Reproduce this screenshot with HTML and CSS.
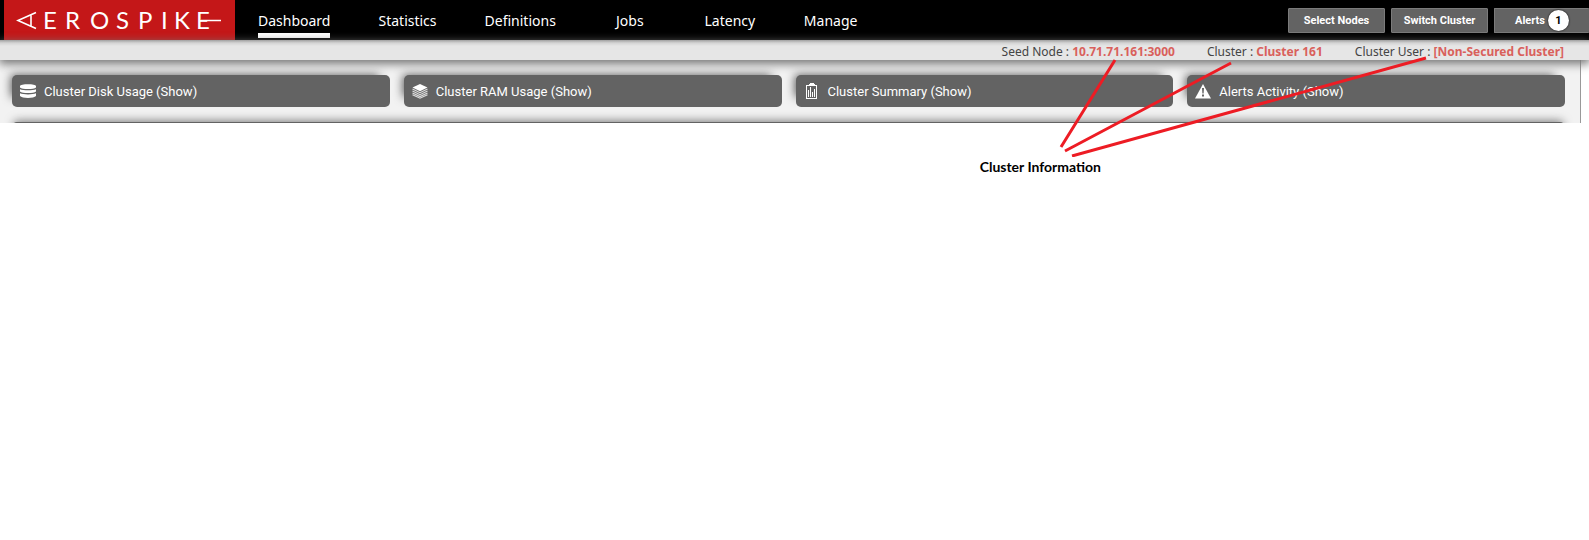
FILE: index.html
```html
<!DOCTYPE html>
<html lang="en">
<head>
<meta charset="utf-8">
<title>Aerospike Dashboard</title>
<link rel="stylesheet" href="styles.css">
</head>
<body>
<div class="console">
  <header class="topbar">
    <a class="logo" href="#" aria-label="Aerospike">
      <svg width="231" height="40" viewBox="0 0 231 40">
        <path class="stroke" d="M32 12.5 14 20.5 32 28.5M27 14.5V26.5M197 20.5H217"/>
        <text class="letters" y="29" x="39 61 86 112 134 157 170 192">EROSPIKE</text>
      </svg>
    </a>
    <nav class="nav">
      <a class="nav-link active" href="#">Dashboard</a>
      <a class="nav-link" href="#">Statistics</a>
      <a class="nav-link" href="#">Definitions</a>
      <a class="nav-link" href="#">Jobs</a>
      <a class="nav-link" href="#">Latency</a>
      <a class="nav-link" href="#">Manage</a>
    </nav>
    <div class="actions">
      <button class="action" type="button">Select Nodes</button>
      <button class="action" type="button">Switch Cluster</button>
      <button class="action last" type="button">Alerts <span class="count">1</span></button>
    </div>
  </header>
  <div class="infobar">
    <span>Seed Node : <b>10.71.71.161:3000</b></span>
    <span>Cluster : <b>Cluster 161</b></span>
    <span>Cluster User : <b>[Non-Secured Cluster]</b></span>
  </div>
  <main class="content">
    <div class="panels">
      <button class="panel" type="button">
        <svg class="icon" width="16" height="16" viewBox="0 0 16 16"><path fill="#fff" d="M0 3C0 .5 16 .5 16 3V4.500C14 6.500 2 6.500 0 4.500ZM0 6.200C3 7.700 13 7.700 16 6.200V8.500C14 10.500 2 10.500 0 8.500ZM0 10.300C3 11.800 13 11.800 16 10.300V13C14 15.500 2 15.500 0 13Z"/></svg>
        Cluster Disk Usage (Show)
      </button>
      <button class="panel" type="button">
        <svg class="icon" width="16" height="16" viewBox="0 0 16 16"><path fill="#fff" d="M8 1 15.500 4.500 8 8.200.5 4.500Z"/><path fill="none" stroke="#ddd" stroke-width="1.200" d="M.5 6 8 9.700 15.500 6M.5 8 8 11.700 15.500 8M.5 10 8 13.500 15.500 10M.5 11.800 8 15.200 15.500 11.800"/></svg>
        Cluster RAM Usage (Show)
      </button>
      <button class="panel" type="button">
        <svg class="icon" width="16" height="16" viewBox="0 0 16 16"><path fill="#fff" fill-rule="evenodd" d="M5 1H6V0H10V1H11V2H13V16H2V2H5ZM3 3V15H12V3Z"/><path fill="#fff" d="M4 7H5V14H4ZM6 4H7V14H6ZM8 9H9V14H8ZM10 6H11V14H10Z"/></svg>
        Cluster Summary (Show)
      </button>
      <button class="panel" type="button">
        <svg class="icon" width="16" height="16" viewBox="0 0 16 16"><path fill="#fff" d="M8 1 16 15.500H0Z"/><path fill="#636363" d="M7 5H9L8.600 10.500H7.400ZM7 11.500H9V13.500H7Z"/></svg>
        Alerts Activity (Show)
      </button>
    </div>
    <div class="next-section"></div>
  </main>
  <div class="annotation">
    <svg class="pointers" width="372" height="104" viewBox="0 0 372 104">
      <path d="M57 7 3 94M173 10 7 98M368 5 14 103"/>
    </svg>
    <p class="caption">Cluster Information</p>
  </div>
</div>
</body>
</html>
```
FILE: styles.css
```css
* { box-sizing: border-box; }
body {
  margin: 0;
  background: #fff;
  font-family: "Noto Sans", sans-serif;
}
.console {
  position: relative;
  min-height: 100vh;
  overflow: hidden;
}
.topbar {
  display: flex;
  height: 40px;
  padding-left: 4px;
  background: #000;
}
.logo { display: block; height: 40px; background: #c41718; }
.logo svg { display: block; }
.stroke { fill: none; stroke: #fff; stroke-width: 1.6; }
.letters { fill: #fff; font: 24px Lato, sans-serif; }
.nav { display: flex; gap: 48px; margin-left: 23px; }
.nav-link {
  min-width: 52px;
  height: 38px;
  padding-top: 11px;
  color: #fff;
  font-size: 14px;
  line-height: 20px;
  text-align: center;
  text-decoration: none;
}
.nav-link.active { border-bottom: 5px solid #fff; }
.actions { display: flex; gap: 6px; margin: 8px 0 0 auto; }
.action {
  display: flex;
  align-items: center;
  justify-content: center;
  width: 97px;
  height: 25px;
  padding: 0;
  border: 1px solid #7b7b7b;
  border-radius: 1px;
  background: #636363;
  color: #fff;
  font: 700 11px Roboto, sans-serif;
}
.action.last { width: 95px; border-right: 0; }
.count {
  width: 21px;
  height: 21px;
  margin-left: 3px;
  border-radius: 50%;
  background: #fff;
  box-shadow: 0 0 2px #000;
  color: #000;
  line-height: 21px;
}
.infobar {
  position: relative;
  display: flex;
  justify-content: flex-end;
  gap: 32px;
  height: 20px;
  padding: 2px 25px 0 0;
  background: linear-gradient(#a0a0a0, #d4d4d4 3px, #e6e6e6 6px);
  box-shadow: 0 3px 10px 1px #777;
  color: #444;
  font-size: 12px;
  line-height: 20px;
}
.infobar b { color: #d9605b; }
.content {
  height: 63px;
  margin-right: 8px;
  padding: 15px 15px 0 12px;
  border-right: 1px solid #999;
  background: #f2f2f2;
  overflow: hidden;
}
.panels { display: grid; grid-template-columns: repeat(4, 1fr); gap: 14px; }
.panel {
  display: flex;
  align-items: center;
  gap: 8px;
  height: 32px;
  padding: 0 8px;
  border: 0;
  border-radius: 5px;
  background: #636363;
  box-shadow: -6px -5px 10px -5px #555;
  color: #fff;
  font: 13px Roboto, sans-serif;
  text-align: left;
}
.icon { flex: none; }
.next-section {
  height: 20px;
  margin-top: 15px;
  border-radius: 5px;
  background: #636363;
  box-shadow: 0 -3px 10px -2px #777;
}
.annotation { position: absolute; top: 53px; left: 1058px; }
.pointers { display: block; }
.pointers path { fill: none; stroke: #ed1c24; stroke-width: 3; }
.caption {
  position: absolute;
  right: 329px;
  top: 104px;
  margin: 0;
  font: 700 14px/20px Lato, sans-serif;
  white-space: nowrap;
}
```
